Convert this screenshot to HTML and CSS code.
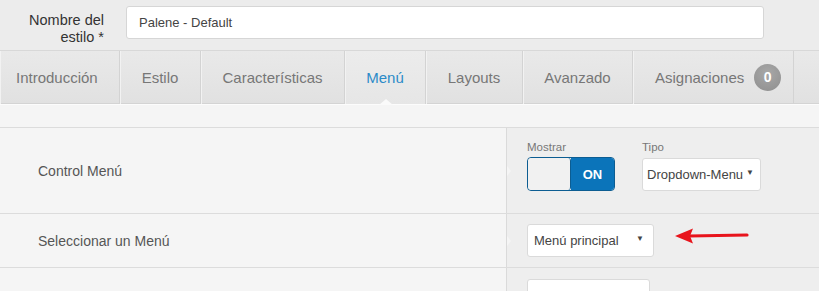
FILE: index.html
```html
<!DOCTYPE html>
<html lang="es">
<head>
<meta charset="utf-8">
<link rel="stylesheet" href="styles.css">
</head>
<body>
<div class="header">
  <label class="hlabel">Nombre del<br>estilo *</label>
  <div class="hinput">Palene - Default</div>
</div>
<ul class="tabs">
  <li class="tab t1">Introducción</li>
  <li class="tab t2">Estilo</li>
  <li class="tab t3">Características</li>
  <li class="tab t4 active">Menú</li>
  <li class="tab t5">Layouts</li>
  <li class="tab t6">Avanzado</li>
  <li class="tab t7">Asignaciones <span class="badge">0</span></li>
</ul>
<div class="strip"></div>
<div class="row row1">
  <div class="lcol">Control Menú</div>
  <div class="rcol">
    <div class="field">
      <div class="flabel">Mostrar</div>
      <div class="toggle"><span class="off"></span><span class="on">ON</span></div>
    </div>
    <div class="field tipo">
      <div class="flabel">Tipo</div>
      <div class="select sel-tipo">Dropdown-Menu<span class="caret">▼</span></div>
    </div>
  </div>
</div>
<div class="row row2">
  <div class="lcol">Seleccionar un Menú</div>
  <div class="rcol">
    <div class="select sel-menu">Menú principal <span class="caret">▼</span></div>
    <svg class="arrow" width="74" height="16" viewBox="0 0 74 16">
      <path d="M14 8 L72 7" stroke="#e8141c" stroke-width="3.2" stroke-linecap="round"/>
      <path d="M0 8 L18 0.5 L15 8 L18 15.5 Z" fill="#e8141c"/>
    </svg>
  </div>
</div>
<div class="row row3">
  <div class="lcol"></div>
  <div class="rcol">
    <div class="select sel-3"></div>
  </div>
</div>
</body>
</html>
```
FILE: styles.css
```css
* { box-sizing: border-box; }
html, body { margin: 0; padding: 0; }
body {
  background: #ececec;
  font-family: "Liberation Sans", Arial, sans-serif;
  color: #333;
  width: 819px;
  height: 291px;
  overflow: hidden;
}
.header {
  height: 50px;
  display: flex;
  align-items: flex-start;
  background: #ececec;
}
.hlabel {
  width: 104px;
  text-align: right;
  font-size: 14.5px;
  line-height: 17px;
  padding-top: 12px;
  color: #333;
}
.hinput {
  margin-left: 22px;
  margin-top: 6px;
  width: 638px;
  height: 33px;
  background: #fff;
  border: 1px solid #d6d6d6;
  border-radius: 3px;
  font-size: 13px;
  line-height: 31px;
  padding-left: 12px;
  color: #444;
}
.tabs {
  list-style: none;
  margin: 0;
  padding: 0;
  display: flex;
  height: 54px;
  border-top: 1px solid #d8d8d8;
  border-bottom: 1px solid #d4d4d4;
  background: linear-gradient(#e9e9e9, #e1e1e1);
}
.tab {
  position: relative;
  height: 53px;
  display: flex;
  align-items: center;
  justify-content: center;
  font-size: 15px;
  color: #777;
  border-right: 1px solid #d3d3d3;
  box-shadow: inset 1px 0 0 #f2f2f2;
}
.t1 { width: 120px; justify-content: flex-start; padding-left: 16px; }
.t2 { width: 81px; }
.t3 { width: 144px; }
.t4 { width: 81px; }
.t5 { width: 97px; }
.t6 { width: 110px; }
.t7 { width: 161px; justify-content: flex-start; padding-left: 22px; }
.tab.active {
  color: #2c8bc8;
  background: linear-gradient(#ececec, #e6e6e6);
}
.tab.active::after {
  content: "";
  position: absolute;
  left: 34px;
  bottom: -1px;
  border-left: 7px solid transparent;
  border-right: 7px solid transparent;
  border-bottom: 6px solid #fafafa;
}
.badge {
  display: inline-block;
  width: 27px;
  height: 27px;
  border-radius: 50%;
  margin-left: 10px;
  background: radial-gradient(circle at 50% 35%, #a8a8a8, #8e8e8e);
  color: #fff;
  font-weight: bold;
  font-size: 14px;
  line-height: 27px;
  text-align: center;
}
.strip {
  height: 24px;
  background: #f5f5f5;
  border-top: 1px solid #fcfcfc;
  border-bottom: 1px solid #dcdcdc;
}
.row {
  display: flex;
  border-bottom: 1px solid #dcdcdc;
}
.row1 { height: 86px; }
.row2 { height: 54px; }
.row3 { height: 23px; border-bottom: 0; overflow: hidden; }
.lcol {
  width: 507px;
  background: #f5f5f5;
  border-right: 1px solid #dadada;
  display: flex;
  align-items: center;
  padding-left: 38px;
  font-size: 14px;
  color: #555;
}
.rcol {
  position: relative;
  flex: 1;
  background: #eeeeee;
  display: flex;
  align-items: flex-start;
  padding-left: 20px;
}
.row1 .rcol::before,
.row2 .rcol::before {
  content: "";
  position: absolute;
  left: 0;
  top: 50%;
  margin-top: -5px;
  border-top: 5px solid transparent;
  border-bottom: 5px solid transparent;
  border-left: 4px solid #f5f5f5;
}
.row1 .rcol { padding-top: 12px; }
.field { display: flex; flex-direction: column; }
.tipo { margin-left: 27px; }
.flabel {
  font-size: 11.5px;
  color: #777;
  line-height: 14px;
  height: 16px;
}
.toggle {
  display: flex;
  width: 88px;
  height: 34px;
  border: 1px solid #0c5d92;
  border-radius: 4px;
  overflow: hidden;
  margin-top: 1px;
}
.toggle .off {
  width: 43px;
  background: #f1f1f1;
  border-right: 1px solid #0c5d92;
  border-radius: 3px;
}
.toggle .on {
  flex: 1;
  background: #0b74ba;
  color: #fff;
  font-weight: bold;
  font-size: 13px;
  display: flex;
  align-items: center;
  justify-content: center;
}
.select {
  display: flex;
  align-items: center;
  background: #fff;
  border: 1px solid #dadada;
  border-radius: 3px;
  height: 33px;
  color: #444;
  white-space: nowrap;
}
.caret { font-size: 8px; color: #444; position: relative; top: -2px; }
.sel-tipo {
  width: 119px;
  margin-top: 2px;
  padding-left: 4px;
  padding-right: 6px;
  font-size: 13px;
  justify-content: space-between;
}
.row2 .rcol { align-items: flex-start; padding-top: 10px; }
.sel-menu {
  width: 127px;
  height: 33px;
  padding-left: 6px;
  padding-right: 9px;
  font-size: 13px;
  justify-content: space-between;
}
.arrow { margin-left: 21px; margin-top: 4px; }
.row3 .rcol { padding-top: 11px; }
.sel-3 { width: 123px; height: 30px; flex-shrink: 0; }
```
